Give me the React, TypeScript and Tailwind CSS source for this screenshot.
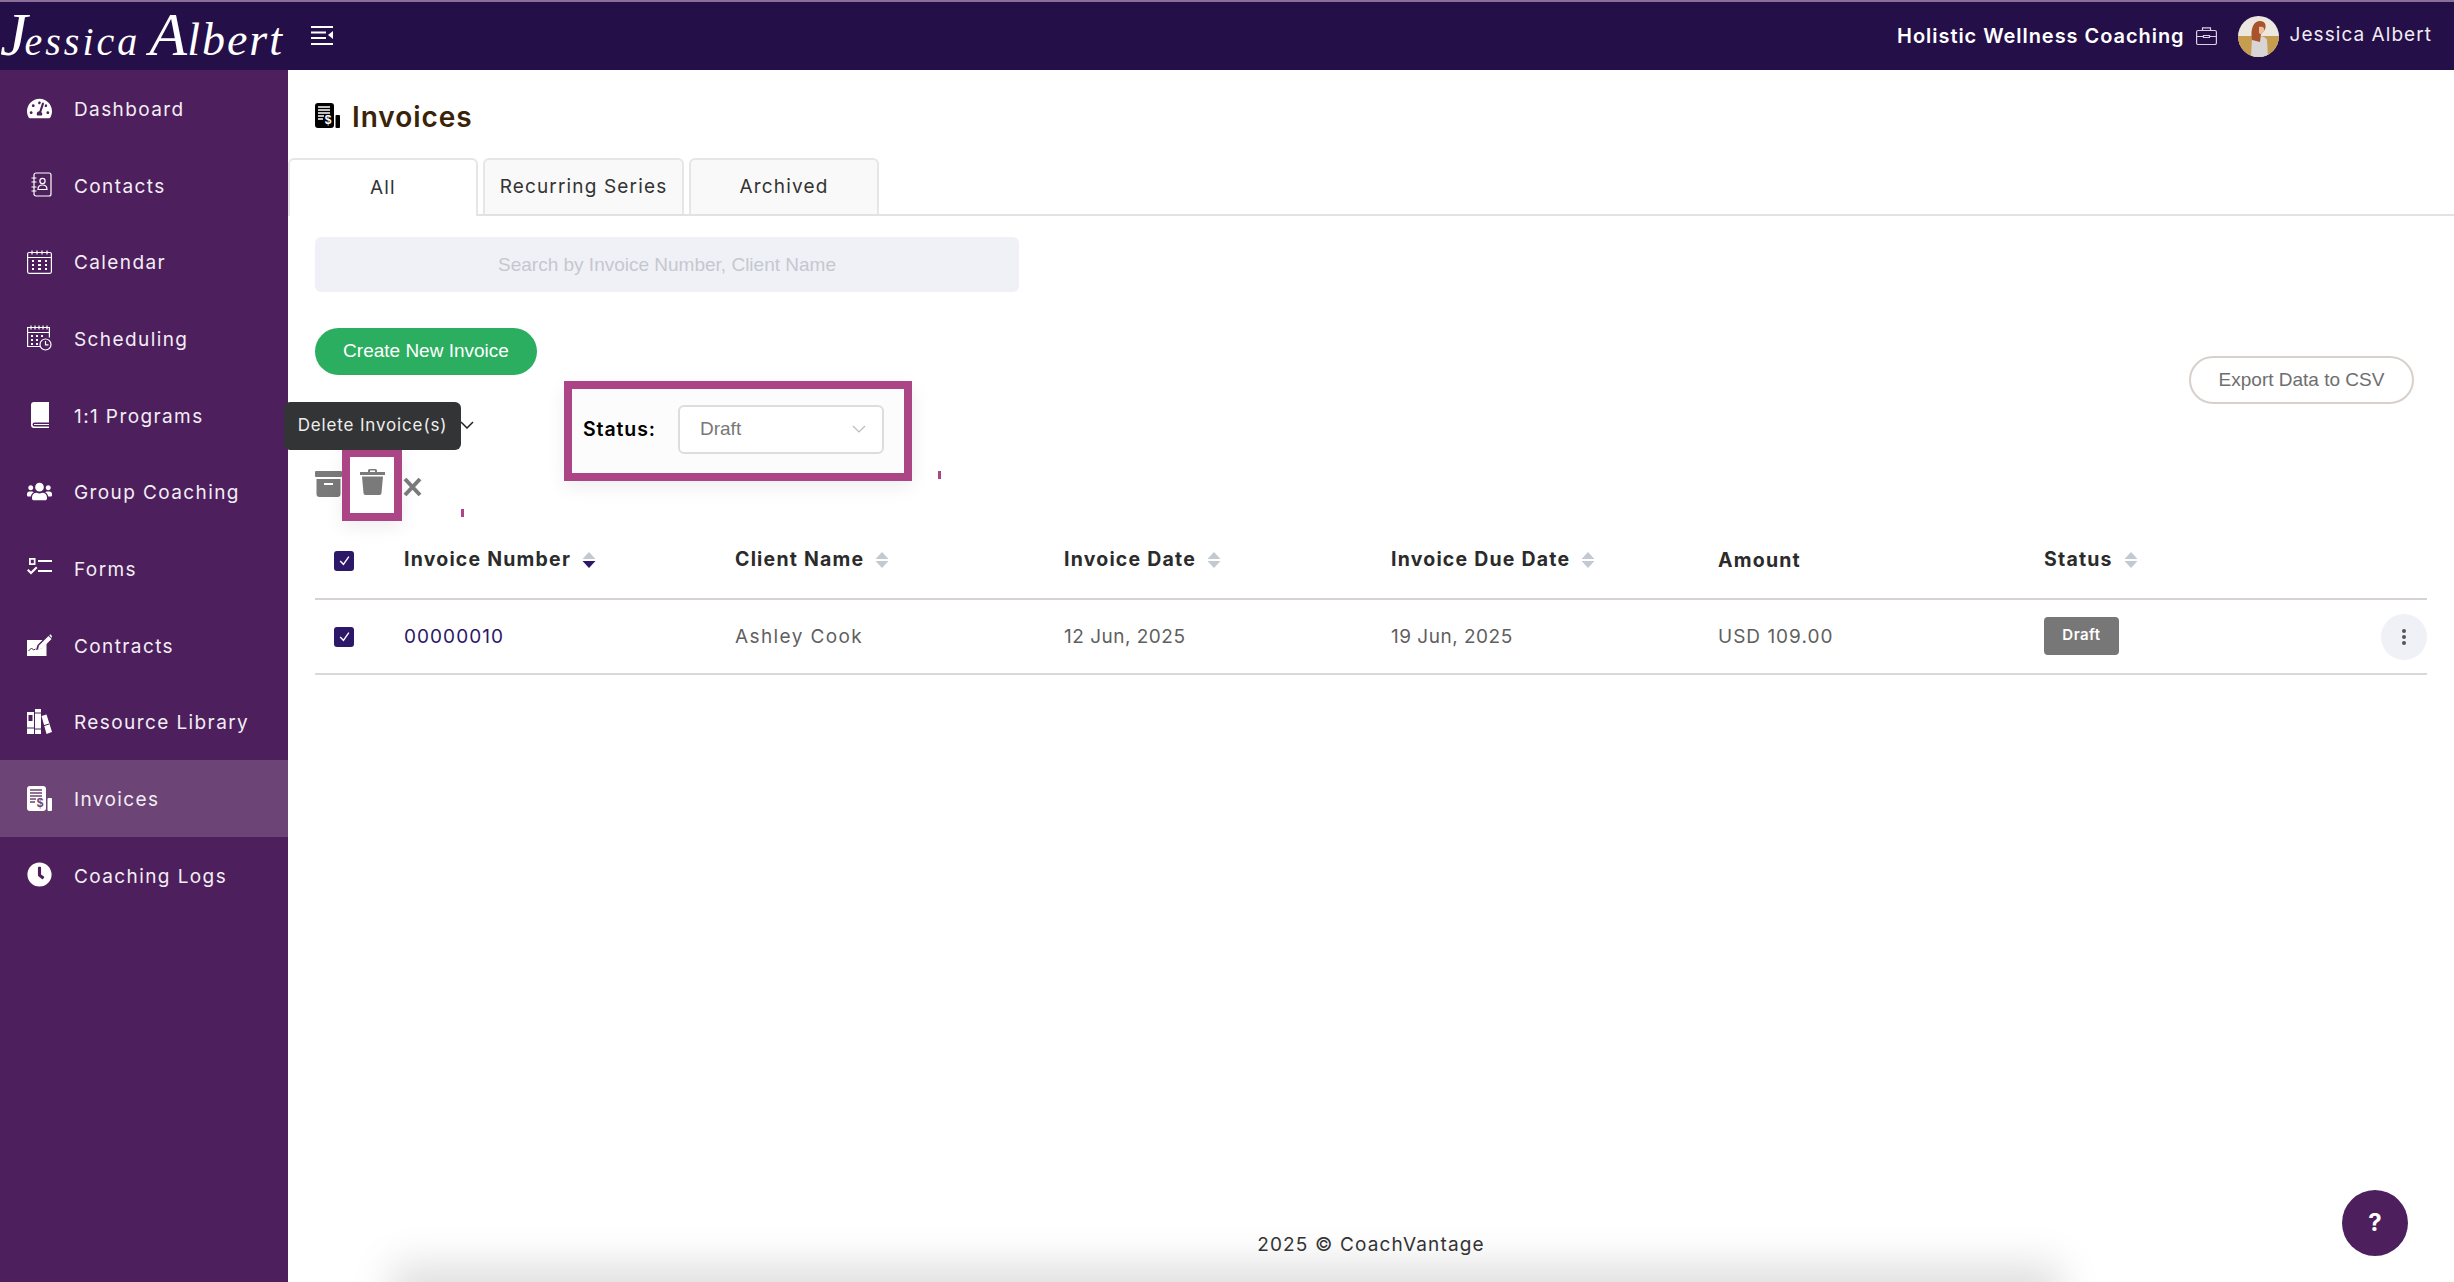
import React from "react";
import { FaTachometerAlt, FaUsers, FaClock } from "react-icons/fa";

const Contacts = () => (
  <svg viewBox="0 0 21 25" width="21" height="25" fill="none" stroke="currentColor" strokeWidth="1.2">
    <rect x="3" y="1" width="17" height="23" rx="2" />
    <path d="M0.5 6h5M0.5 10h5M0.5 15h5M0.5 19h5" />
    <circle cx="11.5" cy="9" r="2.6" />
    <path d="M7 17.5c0-3 2-4.5 4.5-4.5s4.5 1.500 4.500 4.500z" />
  </svg>
);
const Calendar = () => (
  <svg viewBox="0 0 25 24" width="25" height="24" fill="none" stroke="currentColor" strokeWidth="1.2">
    <rect x="0.6" y="2.500" width="23.800" height="20.800" rx="1.500" />
    <path d="M0.600 7.500h23.800M5 0.500v4M10 0.500v4M15 0.500v4M20 0.500v4" />
    <path d="M5 11h2M11 11h3M18 11h2M5 15h2M11 15h3M18 15h2M5 19h2M11 19h3M18 19h2" strokeWidth="1.800" />
  </svg>
);
const Scheduling = () => (
  <svg viewBox="0 0 25 26" width="25" height="26" fill="none" stroke="currentColor" strokeWidth="1.200">
    <path d="M13 21.500H0.600V2.500h21.800v10" />
    <path d="M0.600 7.500h21.800M4 0.500v4M8 0.500v4M12 0.500v4M16 0.500v4M20 0.500v4" />
    <path d="M4 11h2M9 11h2M14 11h2M4 15h2M9 15h2M4 19h2M9 19h2" strokeWidth="1.800" />
    <circle cx="18.500" cy="19.500" r="5.500" />
    <path d="M18.500 16v3.800h3" />
  </svg>
);
const Book = () => (
  <svg viewBox="0 0 18 26" width="18" height="26">
    <path d="M3 0h15v20.500H3.500a2 2 0 0 0 0 4H18V26H3a3 3 0 0 1-3-3V3a3 3 0 0 1 3-3z" fill="currentColor" />
    <rect x="3" y="22" width="15" height="1" fill="currentColor" />
  </svg>
);
const Forms = () => (
  <svg viewBox="0 0 25 20" width="25" height="20" fill="currentColor">
    <path fillRule="evenodd" d="M2 0h6.500v7H2zM3.800 1.800v3.400h3V1.800z" />
    <rect x="11" y="2" width="14" height="2" />
    <rect x="11" y="12" width="14" height="2" />
    <path d="M0 12.500l1.500-1.500 2.500 2.500 5-5 1.500 1.500-6.500 6.500z" />
  </svg>
);
const ContractIcon = () => (
  <svg viewBox="0 0 25 22" width="25" height="22" fill="currentColor">
    <path d="M0 6h15.500l-5 5-1.500 5 5.500-1.500 5-5V22H0z" />
    <path d="M12 11.500L21.500 2l3 3-9.500 9.500-4 1z" />
    <path d="M22.300 1.200l1-1 1.700 1.700-.6 2z" />
    <path d="M1.500 17l3-3 2 2 2-1" fill="none" stroke="#4d1f5c" strokeWidth="1" />
  </svg>
);
const Library = () => (
  <svg viewBox="0 0 25 25" width="25" height="25" fill="currentColor">
    <path fillRule="evenodd" d="M0 3h7v22H0zM1.500 6v6h4V6z" />
    <rect x="8" y="0" width="6" height="25" />
    <path d="M14.500 7l5-1.500L25 23l-5.500 2z" />
    <path d="M8 4h6M8 20h6M0 19h7M16 17l6-2" stroke="#4d1f5c" strokeWidth="1" />
  </svg>
);
const InvoiceIcon = ({ inv }: { inv: string }) => (
  <svg viewBox="0 0 25 25" width="25" height="25">
    <rect x="0" y="0" width="19" height="25" rx="3" fill="currentColor" />
    <rect x="20.500" y="12" width="4.500" height="13" rx="1" fill="currentColor" />
    <path d="M3 4h12M3 7h12M3 10h12M3 13h6M3 16h5" stroke={inv} strokeWidth="1.300" />
    <text x="13" y="21" textAnchor="middle" fontSize="12" fontWeight="700" fontFamily="Liberation Sans" fill={inv}>$</text>
  </svg>
);

const nav: [string, React.ReactNode][] = [
  ["Dashboard", <FaTachometerAlt size={25} />],
  ["Contacts", <span className="block pl-[3px]"><Contacts /></span>],
  ["Calendar", <Calendar />],
  ["Scheduling", <Scheduling />],
  ["1:1 Programs", <Book />],
  ["Group Coaching", <FaUsers size={25} />],
  ["Forms", <Forms />],
  ["Contracts", <ContractIcon />],
  ["Resource Library", <Library />],
  ["Invoices", <InvoiceIcon inv="#6c4475" />],
  ["Coaching Logs", <FaClock size={25} />],
];

const Sort = ({ active }: { active?: boolean }) => (
  <svg viewBox="0 0 13 16" width="14" height="16" className="shrink-0">
    <path d="M6.500 0L13 7H0z" fill="#c3c8d2" />
    <path d="M6.500 16L13 9H0z" fill={active ? "#2d1769" : "#c3c8d2"} />
  </svg>
);
const Check = () => (
  <span className="flex h-[20px] w-[20px] items-center justify-center rounded-[3px] bg-[#2d1769]">
    <svg viewBox="0 0 12 12" width="13" height="13" fill="none" stroke="#fff" strokeWidth="1.300">
      <path d="M2 6.500l3 3 5-7" />
    </svg>
  </span>
);
const Head = ({ t, active, sort = true }: { t: string; active?: boolean; sort?: boolean }) => (
  <div className="-mt-[2px] flex items-center gap-[11px] text-[19.500px] font-bold tracking-[1.2px] text-[#2b2b2b]">
    <span>{t}</span>
    {sort && <Sort active={active} />}
  </div>
);

export default function App() {
  return (
    <div className="flex h-screen w-full flex-col overflow-hidden bg-white font-['Inter',sans-serif]">
      <header className="flex h-[70px] shrink-0 items-center border-t-2 border-[#8a6f9a] bg-[#250f48] text-white">
        <div className="h-[68px] w-[292px] shrink-0 whitespace-nowrap font-['Liberation_Serif',serif] italic leading-[64px]">
          <span className="text-[62px] tracking-[-3px]">J</span>
          <span className="text-[40px] tracking-[3px]">essica</span>
          <span className="ml-[9px] text-[62px]">A</span>
          <span className="text-[46px] tracking-[2px]">lbert</span>
        </div>
        <svg viewBox="0 0 22 19" width="22" height="19" className="ml-[19px] -mt-[2px] shrink-0" fill="#fff">
          <rect x="0" y="0" width="22" height="2" />
          <rect x="0" y="5.500" width="15" height="2" />
          <rect x="0" y="11" width="15" height="2" />
          <rect x="0" y="17" width="22" height="2" />
          <path d="M22 5v8l-5-4z" />
        </svg>
        <div className="ml-auto flex items-center">
          <span className="text-[20px] font-semibold tracking-[0.95px]">Holistic Wellness Coaching</span>
          <svg viewBox="0 0 21 18" width="21" height="18" className="ml-[11px]" fill="none" stroke="#d8cfe0" strokeWidth="1.200">
            <rect x="0.600" y="3.500" width="19.800" height="14" rx="1.500" />
            <path d="M6.500 3.500V0.800h8v2.700M0.600 9.500h7M13.500 9.500h7M7.500 8.500h6v2h-6z" />
          </svg>
          <svg viewBox="0 0 41 41" width="41" height="41" className="ml-[21px]">
            <defs>
              <clipPath id="av"><circle cx="20.500" cy="20.500" r="20.500" /></clipPath>
            </defs>
            <g clipPath="url(#av)">
              <rect width="41" height="41" fill="#ece8e0" />
              <rect y="20" width="41" height="21" fill="#c69c4e" />
              <path d="M13 41l1-18c1-4 13-4 15 1l1 17z" fill="#d9d5d6" />
              <path d="M14 24c-2-12 2-19 8-19 6 0 7 6 4 10l-3 3-1 8z" fill="#a9532c" />
              <path d="M21 11c3-1 6 0 5 4-1 3-4 4-5 2z" fill="#ecbf9f" />
            </g>
          </svg>
          <span className="ml-[11px] mr-[22px] -mt-[2px] text-[19px] tracking-[1.05px] text-[#f0ecf4]">Jessica Albert</span>
        </div>
      </header>

      <div className="flex min-h-0 flex-1">
        <aside className="w-[288px] shrink-0 bg-[#4d1f5c] text-white">
          {nav.map(([label, icon]) => (
            <div
              key={label}
              className={`flex h-[76.67px] items-center pl-[27px] ${label === "Invoices" ? "bg-[#6c4475]" : ""}`}
            >
              <span className="flex w-[25px] shrink-0 justify-center">{icon}</span>
              <span className="ml-[22px] mt-[4px] text-[19px] tracking-[1.4px] text-[#f3eef5]">{label}</span>
            </div>
          ))}
        </aside>

        <main className="relative flex min-w-0 flex-1 flex-col">
          <div className="flex h-[88px] shrink-0 items-start pl-[27px] pt-[33px]">
            <span className="text-black"><InvoiceIcon inv="#ffffff" /></span>
            <h1 className="ml-[12px] -mt-[2px] text-[28px] font-semibold leading-[32px] tracking-[0.95px] text-[#3a2308]">Invoices</h1>
          </div>

          <div className="flex h-[58px] shrink-0 items-end gap-[5px] border-b-2 border-[#e2e2e2] text-[19px] tracking-[1.15px] text-[#333]">
            <div className="z-[1] -mb-[2px] flex h-[58px] w-[190px] items-center justify-center rounded-t-[6px] border-2 border-b-0 border-[#e6e6e6] bg-white pt-[1px]">All</div>
            <div className="flex h-[56px] w-[201px] items-center justify-center rounded-t-[6px] border-2 border-b-0 border-[#e6e6e6] bg-[#f9f9f9] pt-[1px]">Recurring Series</div>
            <div className="flex h-[56px] w-[190px] items-center justify-center rounded-t-[6px] border-2 border-b-0 border-[#e6e6e6] bg-[#f9f9f9] pt-[1px]">Archived</div>
          </div>

          <div className="flex flex-col pl-[27px] pr-[27px]">
            <div className="mt-[21px] flex h-[55px] w-[704px] items-center justify-center rounded-[6px] bg-[#f0f1f7] pt-[2px] font-['Liberation_Sans',sans-serif] text-[19px] text-[#c5c7d0]">
              Search by Invoice Number, Client Name
            </div>

            <div className="flex items-start justify-between">
              <div className="flex flex-col">
                <button className="mt-[36px] h-[47px] w-[222px] rounded-full bg-[#2bae60] font-['Liberation_Sans',sans-serif] text-[19px] text-white">
                  Create New Invoice
                </button>
                <div className="mt-[6px] flex">
                  <div className="relative flex w-[249px] flex-col">
                    <div className="flex h-[68px] shrink-0 pl-[145px] pt-[40px]">
                      <svg viewBox="0 0 14 8" width="14" height="8" fill="none" stroke="#222" strokeWidth="1.500">
                        <path d="M1 1l6 6 6-6" />
                      </svg>
                    </div>
                    <div className="flex items-start">
                      <svg viewBox="0 0 27 26" width="27" height="26" className="mt-[22px]" fill="#7a7a7a">
                        <rect x="0" y="0" width="27" height="6" rx="1" />
                        <path fillRule="evenodd" d="M1.500 8h24v15a3 3 0 0 1-3 3h-18a3 3 0 0 1-3-3zM9 12v2h9v-2z" />
                      </svg>
                      <div className="flex h-[72px] w-[60px] justify-center border-8 border-[#ac4585] bg-white pt-[12px] shadow-[0_6px_18px_rgba(0,0,0,0.07)]">
                        <svg viewBox="0 0 25 26" width="25" height="26" fill="#7a7a7a">
                          <path d="M8 3V1.500A1.500 1.500 0 0 1 9.500 0h6A1.500 1.500 0 0 1 17 1.500V3h8v3H0V3zM10 1.500V3h5V1.500z" fillRule="evenodd" />
                          <path d="M2 7.500h21L21.500 24a2 2 0 0 1-2 2h-14a2 2 0 0 1-2-2z" />
                        </svg>
                      </div>
                      <svg viewBox="0 0 19 20" width="19" height="20" className="ml-px mt-[28px]" fill="none" stroke="#7a7a7a" strokeWidth="4">
                        <path d="M2 2l15 16M17 2L2 18" />
                      </svg>
                    </div>
                    <div className="absolute -left-[31px] top-[21px] z-10 flex h-[48px] w-[177px] items-center justify-center rounded-[6px] bg-[#333435] text-[17px] tracking-[0.85px] text-[#eeeeee]">
                      Delete Invoice(s)
                    </div>
                    <div className="absolute left-[146px] top-[128px] h-[8px] w-[3px] bg-[#ac4585]" />
                  </div>
                  <div className="relative flex h-[100px] w-[348px] items-center border-8 border-[#ac4585] bg-[#fcfcfc] pl-[11px] shadow-[0_6px_18px_rgba(0,0,0,0.07)]">
                    <span className="-mt-[2px] w-[72px] shrink-0 whitespace-nowrap text-[19.500px] font-semibold tracking-[0.9px] text-black">Status:</span>
                    <div className="-mt-[4px] ml-[23px] flex h-[49px] w-[206px] items-center justify-between rounded-[6px] border-2 border-[#dddddd] bg-white pl-[20px] pr-[16px] font-['Liberation_Sans',sans-serif] text-[19px] text-[#777777]">
                      Draft
                      <svg viewBox="0 0 14 8" width="14" height="8" fill="none" stroke="#bbbbbb" strokeWidth="1.200">
                        <path d="M1 1l6 6 6-6" />
                      </svg>
                    </div>
                    <div className="absolute -right-[37px] top-[82px] h-[8px] w-[3px] bg-[#ac4585]" />
                  </div>
                </div>
              </div>
              <button className="mr-[13px] mt-[64px] h-[48px] w-[225px] rounded-full border-2 border-[#d8d0cc] font-['Liberation_Sans',sans-serif] text-[19px] text-[#6e6e6e]">
                Export Data to CSV
              </button>
            </div>

            <div className="mt-[2px] grid grid-cols-[89px_331px_329px_327px_327px_326px_1fr]">
              <div className="flex h-[77px] items-center border-b-2 border-[#d8d2d0] pl-[19px]"><Check /></div>
              <div className="flex h-[77px] items-center border-b-2 border-[#d8d2d0]"><Head t="Invoice Number" active /></div>
              <div className="flex h-[77px] items-center border-b-2 border-[#d8d2d0]"><Head t="Client Name" /></div>
              <div className="flex h-[77px] items-center border-b-2 border-[#d8d2d0]"><Head t="Invoice Date" /></div>
              <div className="flex h-[77px] items-center border-b-2 border-[#d8d2d0]"><Head t="Invoice Due Date" /></div>
              <div className="flex h-[77px] items-center border-b-2 border-[#d8d2d0] pt-[2px]"><Head t="Amount" sort={false} /></div>
              <div className="flex h-[77px] items-center border-b-2 border-[#d8d2d0]"><Head t="Status" /></div>

              <div className="flex h-[75px] items-center border-b-2 border-[#dcd8d8] pl-[19px]"><Check /></div>
              <div className="flex h-[75px] items-center border-b-2 border-[#dcd8d8] pt-[2px] text-[19px] tracking-[1.05px] text-[#2d1769]">00000010</div>
              <div className="flex h-[75px] items-center border-b-2 border-[#dcd8d8] pt-[2px] text-[19px] tracking-[1.4px] text-[#5f5f5f]">Ashley Cook</div>
              <div className="flex h-[75px] items-center border-b-2 border-[#dcd8d8] pt-[2px] text-[19px] tracking-[0.5px] text-[#5f5f5f]">12 Jun, 2025</div>
              <div className="flex h-[75px] items-center border-b-2 border-[#dcd8d8] pt-[2px] text-[19px] tracking-[0.5px] text-[#5f5f5f]">19 Jun, 2025</div>
              <div className="flex h-[75px] items-center border-b-2 border-[#dcd8d8] pt-[2px] text-[19px] tracking-[1px] text-[#5f5f5f]">USD 109.00</div>
              <div className="flex h-[75px] items-center justify-between border-b-2 border-[#dcd8d8]">
                <span className="flex h-[38px] w-[75px] -mt-[2px] items-center justify-center rounded-[4px] bg-[#777777] text-[15px] font-semibold tracking-[0.5px] text-white">Draft</span>
                <span className="flex h-[46px] w-[46px] items-center justify-center rounded-full bg-[#f0f1f7]">
                  <svg viewBox="0 0 4 16" width="4" height="16" fill="#555"><circle cx="2" cy="2" r="2" /><circle cx="2" cy="8" r="2" /><circle cx="2" cy="14" r="2" /></svg>
                </span>
              </div>
            </div>
          </div>

          <footer className="relative mt-auto flex h-[76px] shrink-0 items-center justify-center pt-[2px] text-[19px] tracking-[1.15px] text-[#333]">
            <div className="absolute bottom-[-24px] left-[125px] right-[415px] h-[20px] shadow-[0_0_40px_22px_rgba(0,0,0,0.13)]" />
            <span className="relative">2025 © CoachVantage</span>
          </footer>

          <button className="absolute bottom-[26px] right-[46px] flex h-[66px] w-[66px] items-center justify-center rounded-full bg-[#4d1f5c] text-[24px] font-bold text-white">?</button>
        </main>
      </div>
    </div>
  );
}
